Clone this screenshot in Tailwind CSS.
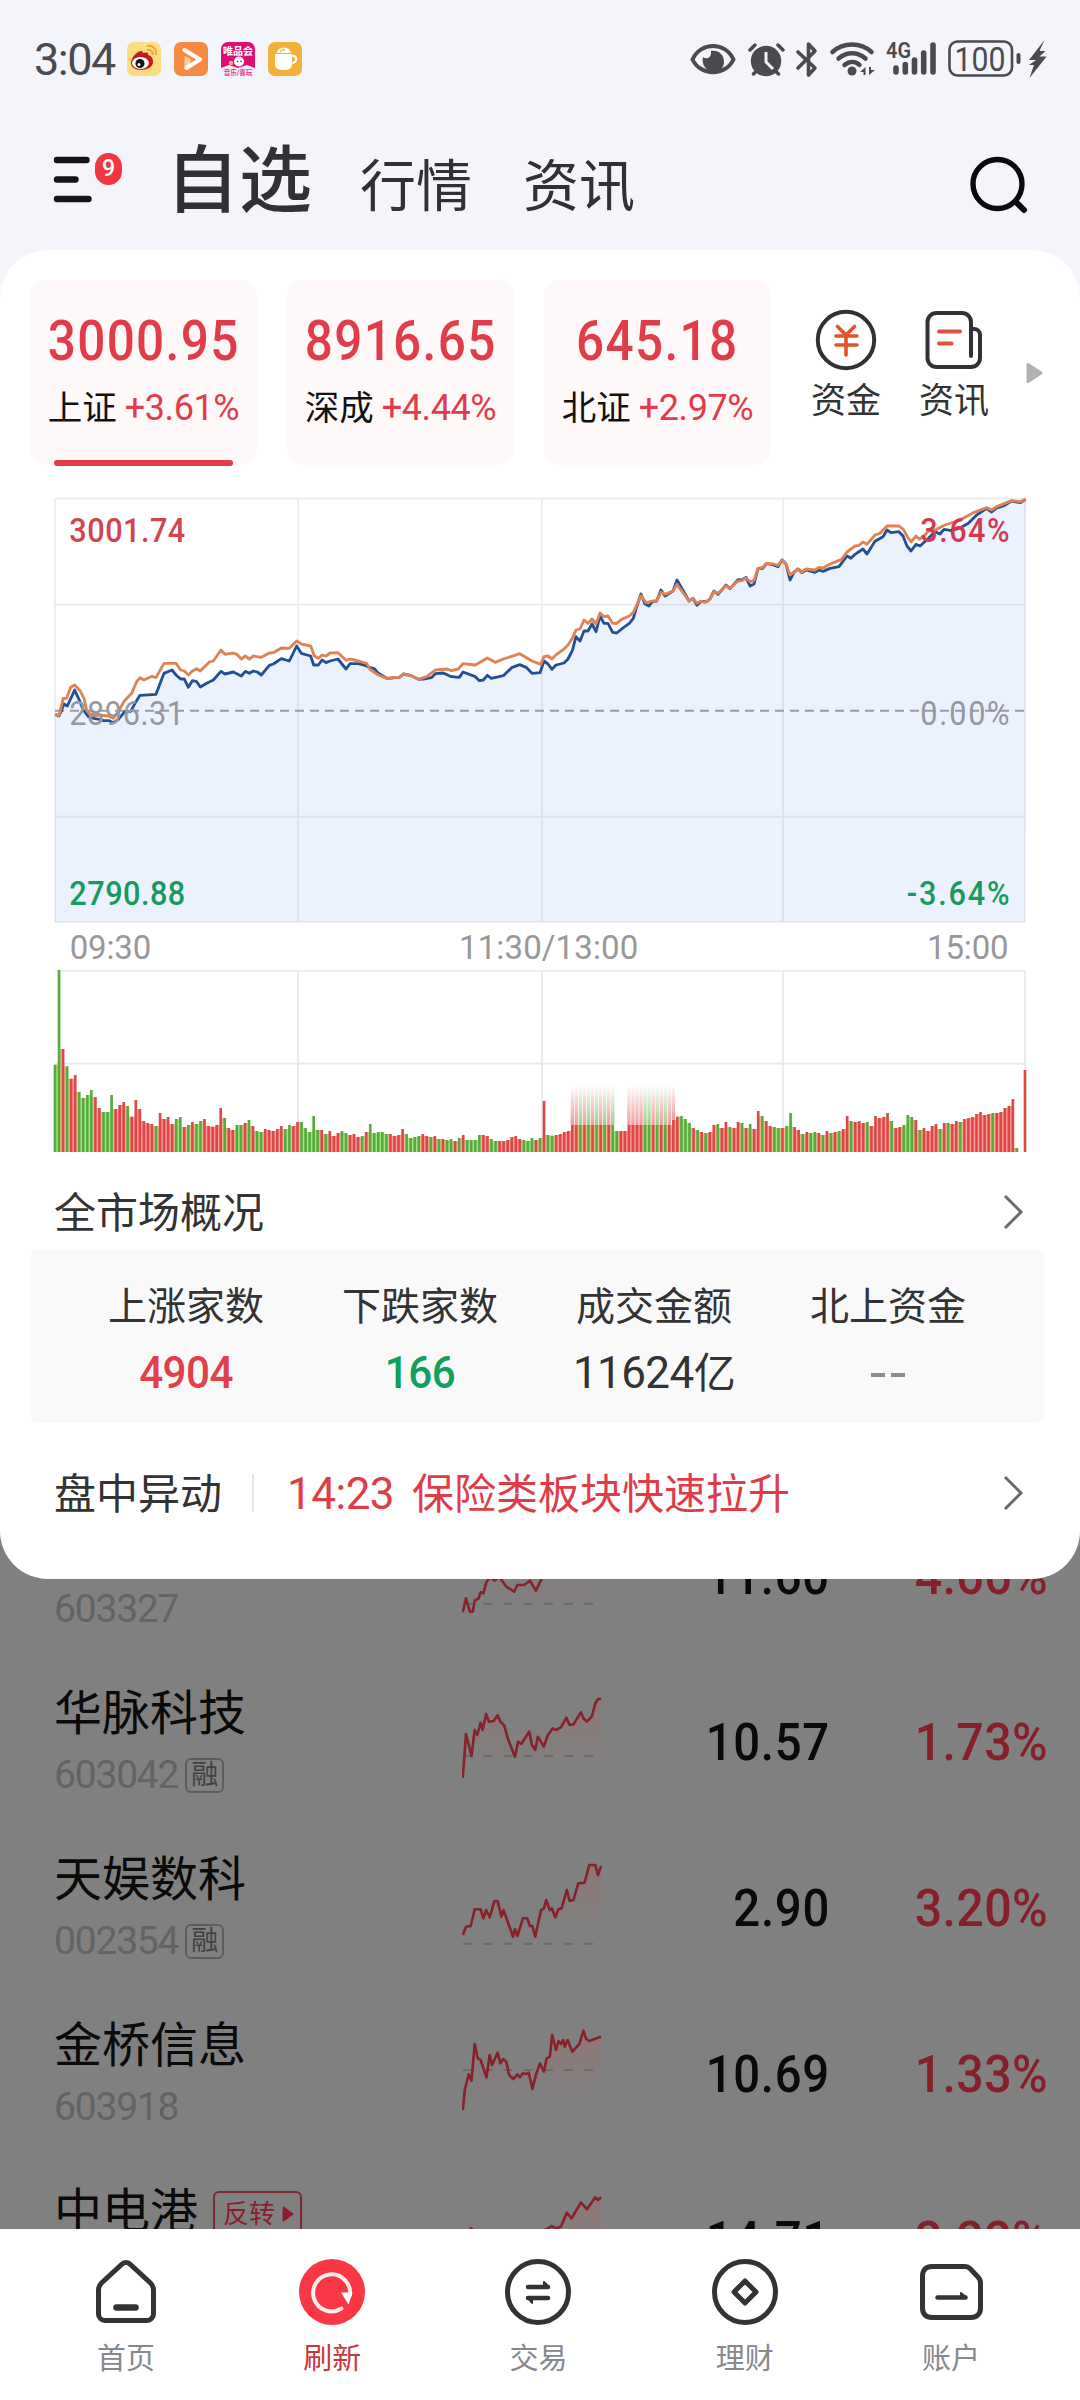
<!DOCTYPE html>
<html lang="zh-CN">
<head>
<meta charset="utf-8">
<title>自选</title>
<script src="https://cdn.jsdelivr.net/npm/@tailwindcss/browser@4"></script>
</head>
<body class="bg-[#f4f5fa]">
<div class="relative flex h-[2400px] w-[1080px] flex-col overflow-hidden bg-[#f4f5fa] font-['Roboto','Noto_Sans_CJK_SC',sans-serif] text-[#333]">

  <!-- status bar -->
  <div class="flex h-[118px] shrink-0 items-center pl-[34px] pr-[34px] text-[#4a4b4e]">
    <div class="w-[93px] pt-[2px] text-[45px] leading-[50px] tracking-[-1.500px]">3:04</div>
    <div class="flex gap-[13px]">
      <svg width="34" height="34" viewBox="0 0 34 34"><rect width="34" height="34" rx="7" fill="#fcdd80"/><path d="M20 8c3-1 6 1 6 5M20 4c6-1 10 3 9 9" fill="none" stroke="#e9a93c" stroke-width="2"/><path d="M4 21c0-5 5-11 10-12 2 0 2 1 2 2 3-1 6-1 5 2 4 1 5 4 5 7 0 5-6 8-12 8S4 25 4 21z" fill="#c8191e"/><ellipse cx="13.500" cy="21" rx="8.500" ry="6" fill="#fff"/><circle cx="13" cy="21.500" r="4.500" fill="#111"/><circle cx="12" cy="22.500" r="1.500" fill="#fff"/></svg>
      <svg width="34" height="34" viewBox="0 0 34 34"><rect width="34" height="34" rx="7" fill="#f68a42"/><path d="M10.500 14v13l6-3v-7z" fill="#fbd0a8"/><path d="M10.500 8L26 17.500 12.500 26" fill="none" stroke="#fff" stroke-width="4" stroke-linecap="round" stroke-linejoin="round"/></svg>
      <svg width="34" height="34" viewBox="0 0 34 34"><rect width="34" height="34" rx="7" fill="#fbe9f3"/><path d="M0 26V7a7 7 0 0 1 7-7h20a7 7 0 0 1 7 7v19l-8-3-9 3-9-3z" fill="#dd0f74"/><text x="17" y="13" font-size="10" font-weight="700" fill="#fff" text-anchor="middle">唯品会</text><circle cx="18" cy="19.500" r="5" fill="#fff"/><circle cx="10" cy="21" r="2.200" fill="#f6b48c"/><circle cx="16.500" cy="19.500" r=".8" fill="#333"/><circle cx="20" cy="19.500" r=".8" fill="#333"/><text x="17" y="32.500" font-size="6.500" font-weight="700" fill="#dd3f92" text-anchor="middle">音乐/喜玩</text></svg>
      <svg width="34" height="34" viewBox="0 0 34 34"><rect width="34" height="34" rx="7" fill="#f3b13c"/><path d="M9 11c1-7 13-7 14 0z" fill="#fff"/><path d="M12 10l3-3 2 2" fill="none" stroke="#f3b13c" stroke-width="1.200"/><path d="M7 12h17v10c0 4-3 6-8.500 6S7 26 7 22z" fill="#fff"/><path d="M24 14c6-1 5 7 0 7" fill="none" stroke="#fff" stroke-width="2.200"/></svg>
    </div>
    <div class="ml-auto flex items-center">
      <svg width="356" height="40" viewBox="690 38 356 40">
        <path d="M692.500 58.500c8-18 33-18 41 0-8 17-33 17-41 0z" fill="none" stroke="#4a4b4e" stroke-width="4"/>
        <path d="M703 56c3 3 9 1 8-6 8-1 13 4 13 11 0 6-5 10-10 10-7 0-13-7-11-15z" fill="#4a4b4e"/>
        <circle cx="766" cy="60" r="15.200" fill="#4a4b4e"/><path d="M750 49l5-5M783 49l-5-5M753.500 73l3-3M778.500 73l-3-3" stroke="#4a4b4e" stroke-width="3.500" stroke-linecap="round"/><path d="M766 51v10l7 7" fill="none" stroke="#f4f5fa" stroke-width="3"/>
        <path d="M798 51l17 16-6.500 7V43l6.500 7-17 17" fill="none" stroke="#4a4b4e" stroke-width="3.600" stroke-linejoin="round" stroke-linecap="round"/>
        <g fill="none" stroke="#4a4b4e" stroke-width="4.500" stroke-linecap="round"><path d="M832.500 51c11-10 28-10 39 0M838.500 57.500c8-7 19-7 27 0M844.500 64c5-4 11-4 15 0"/></g>
        <circle cx="852" cy="70" r="4.500" fill="#4a4b4e"/><path d="M860 71l5.500-5v8h-2v-3zM875 69l-6 5v-8h2v3z" fill="#4a4b4e"/>
        <text x="886" y="57" font-size="22" font-weight="600" fill="#4a4b4e" textLength="25" lengthAdjust="spacingAndGlyphs">4G</text>
        <g stroke="#4a4b4e" stroke-width="5.600" stroke-linecap="round"><path d="M896 67v4M905.300 63.500v7.500M914.500 59v12M923.700 52v19M933 44v27"/></g>
        <rect x="949.500" y="40.500" width="62.500" height="34" rx="8" fill="none" stroke="#4a4b4e" stroke-width="2.600"/><rect x="1016.500" y="52" width="4" height="11" rx="2" fill="#4a4b4e"/>
        <text x="954.500" y="69.500" font-size="33" fill="#4a4b4e" textLength="51" lengthAdjust="spacingAndGlyphs">100</text>
        <path d="M1044.500 39l-15.500 20h7l-7 5h5l-4.500 13 17-21.500h-7l6-5.500h-6z" fill="#4a4b4e"/>
      </svg>
    </div>
  </div>

  <!-- header -->
  <div class="flex h-[132px] shrink-0 items-start pl-[50px]">
    <div class="relative mt-[35px] h-[54px] w-[116px]">
      <svg width="76" height="54" viewBox="0 0 76 54"><path d="M7 7h29.500M7 26.500h18.500M7 46h31.500" stroke="#141517" stroke-width="6.400" stroke-linecap="round"/></svg>
      <span class="absolute left-[45px] top-0 flex h-8 w-[27px] items-center justify-center rounded-[14px] bg-[#ef3842] text-[23px] font-medium leading-8 text-white">9</span>
    </div>
    <div class="flex items-baseline pt-[3px] text-[#2f3133]">
      <span class="w-[194px] text-[73px] font-medium leading-[120px]">自选</span>
      <span class="w-[163px] text-[56px] leading-[120px]">行情</span>
      <span class="text-[56px] leading-[120px]">资讯</span>
    </div>
    <svg class="ml-auto mr-[50px] mt-[34px]" width="60" height="64" viewBox="0 0 60 64"><circle cx="27.500" cy="32" r="24.500" fill="none" stroke="#0a0a0c" stroke-width="5.400"/><path d="M46 50l8 8" stroke="#0a0a0c" stroke-width="6" stroke-linecap="round"/></svg>
  </div>

  <!-- market panel -->
  <section class="relative z-10 flex h-[1329px] shrink-0 flex-col rounded-[48px] bg-white">
    <div class="flex h-[230px] shrink-0 pl-[30px] pt-[30px]">
      <div class="flex gap-[30px]">
        <div class="relative flex h-[185px] w-[227px] flex-col items-center rounded-2xl bg-[#fef8f8] text-[#e03c4a]">
          <div class="mt-[31px] scale-x-[0.9] text-[55px] font-medium leading-[60px] tracking-[1.500px]">3000.95</div>
          <div class="mt-[17px] flex items-center gap-2 text-[36px] leading-[40px] tracking-[-0.400px]"><span class="text-[34.500px] tracking-normal text-[#111]">上证</span>+3.61%</div>
          <div class="absolute bottom-[-1px] left-[24px] h-[6px] w-[179px] rounded-full bg-[#e23b4b]"></div>
        </div>
        <div class="flex h-[185px] w-[227px] flex-col items-center rounded-2xl bg-[#fef8f8] text-[#e03c4a]">
          <div class="mt-[31px] scale-x-[0.9] text-[55px] font-medium leading-[60px] tracking-[1.500px]">8916.65</div>
          <div class="mt-[17px] flex items-center gap-2 text-[36px] leading-[40px] tracking-[-0.400px]"><span class="text-[34.500px] tracking-normal text-[#111]">深成</span>+4.44%</div>
        </div>
        <div class="flex h-[185px] w-[227px] flex-col items-center rounded-2xl bg-[#fef8f8] text-[#e03c4a]">
          <div class="mt-[31px] scale-x-[0.9] text-[55px] font-medium leading-[60px] tracking-[1.500px]">645.18</div>
          <div class="mt-[17px] flex items-center gap-2 text-[36px] leading-[40px] tracking-[-0.400px]"><span class="text-[34.500px] tracking-normal text-[#111]">北证</span>+2.97%</div>
        </div>
      </div>
      <div class="ml-[21px] flex w-[108px] flex-col items-center pt-[28px]">
        <svg width="64" height="64" viewBox="0 0 64 64"><circle cx="32" cy="32" r="28.200" fill="none" stroke="#303134" stroke-width="4"/><path d="M23.500 18.500L32 27l8.500-8.500M22 28h21M22 37h21M32 28v19" fill="none" stroke="#e2532c" stroke-width="3.600" stroke-linecap="round" stroke-linejoin="round"/></svg>
        <div class="mt-[10px] text-[35px] leading-[40px]">资金</div>
      </div>
      <div class="flex w-[108px] flex-col items-center pt-[28px]">
        <svg width="64" height="64" viewBox="0 0 64 64"><path d="M49 48V14a9 9 0 0 0-9-9H14.500a9 9 0 0 0-9 9v36a9 9 0 0 0 9 9H49a9 9 0 0 0 9-9V27a6 6 0 0 0-6-6h-2" fill="none" stroke="#303134" stroke-width="4" stroke-linecap="round"/><path d="M17 23.500h21M17 35.500h12.500" stroke="#d9553a" stroke-width="4" stroke-linecap="round"/></svg>
        <div class="mt-[10px] text-[35px] leading-[40px]">资讯</div>
      </div>
      <svg class="ml-[17px] mt-[81px]" width="20" height="24" viewBox="0 0 20 24"><path d="M3 3.500v17L16 12z" fill="#b1b1b1" stroke="#b1b1b1" stroke-width="3" stroke-linejoin="round"/></svg>
    </div>

    <!-- intraday and volume charts -->
    <svg class="ml-[40px] shrink-0" id="chart" width="1000" height="690" viewBox="0 0 3000 2070">
      <defs>
        <linearGradient id="fr" x1="0" y1="0" x2="0" y2="1"><stop offset="0" stop-color="#e5484a" stop-opacity="0"/><stop offset="1" stop-color="#e5484a" stop-opacity=".55"/></linearGradient>
        <linearGradient id="fg" x1="0" y1="0" x2="0" y2="1"><stop offset="0" stop-color="#5cb03c" stop-opacity="0"/><stop offset="1" stop-color="#5cb03c" stop-opacity=".6"/></linearGradient>
      </defs>
      <polygon id="area" fill="#ebf1fd"/>
      <g fill="none" stroke-width="5">
        <path d="M45 56H2955M45 374H2955M45 1010H2955M45 1326H2955M45 54V1328M774 56V1326M1506 56V1326M2229 56V1326M2955 56V1326" stroke="#788296" stroke-opacity=".15"/>
        <path d="M45 1473H2957M45 1751H2955M774 1473V2010M1506 1473V2010M2229 1473V2010M2955 1473V2010" stroke="#e8e8e9"/>
      </g>
      <path d="M45 692H2955" stroke="#989ca5" stroke-width="6" stroke-dasharray="27 18"/>
      <polyline id="blue" fill="none" stroke="#234f95" stroke-width="8.500" stroke-linejoin="round"/>
      <polyline id="orange" fill="none" stroke="#df8254" stroke-width="8.500" stroke-linejoin="round"/>
      <g id="bars"></g>
      <g font-size="99">
        <g transform="translate(88 185) scale(.93 1)" font-weight="500"><text fill="#d34452" textLength="374">3001.74</text><text y="1090" fill="#169a60" textLength="374">2790.88</text></g>
        <g transform="translate(88 735) scale(.93 1)"><text fill="#95989f" textLength="370">2896.31</text></g>
        <g transform="translate(2641 185) scale(.93 1)" font-weight="500"><text fill="#d33a52" textLength="288">3.64%</text><text y="550" fill="#95989f" font-weight="400" textLength="288">0.00%</text><text x="-44" y="1090" fill="#169a60" textLength="332">-3.64%</text></g>
        <g fill="#98989a"><text x="89" y="1437" textLength="245">09:30</text><text x="1257" y="1437" textLength="538">11:30/13:00</text><text x="2661" y="1437" textLength="245">15:00</text></g>
      </g>
    </svg>

    <div class="mt-[12px] flex h-[60px] shrink-0 items-center justify-between pl-[54px] pr-[56px]">
      <span class="pt-[3px] text-[42px] leading-[60px]">全市场概况</span>
      <svg width="22" height="38" viewBox="0 0 22 38"><path d="M3 3l16 16L3 35" fill="none" stroke="#68696c" stroke-width="3"/></svg>
    </div>
    <div class="ml-[30px] mt-[8px] grid h-[173px] w-[1014px] shrink-0 grid-cols-4 rounded-lg bg-[#f9f9f9] pl-[39px] pr-[39px] pt-[31px] text-center text-[44px] leading-[60px] tracking-[-0.600px]">
      <div><div class="text-[39px] leading-[52px] tracking-normal">上涨家数</div><div class="mt-[10px] scale-x-[0.96] font-medium text-[#df404c]">4904</div></div>
      <div><div class="text-[39px] leading-[52px] tracking-normal">下跌家数</div><div class="mt-[10px] scale-x-[0.96] font-medium text-[#119f5f]">166</div></div>
      <div><div class="text-[39px] leading-[52px] tracking-normal">成交金额</div><div class="mt-[10px]">11624<span class="text-[42px]">亿</span></div></div>
      <div><div class="text-[39px] leading-[52px] tracking-normal">北上资金</div><div class="mt-[24px] flex justify-center gap-[6px]"><i class="mt-4 h-[4px] w-[14px] bg-[#8c8c8c]"></i><i class="mt-4 h-[4px] w-[14px] bg-[#8c8c8c]"></i></div></div>
    </div>
    <div class="mt-[40px] flex h-[60px] shrink-0 items-center pl-[54px] pr-[56px] text-[42px] leading-[60px]">
      <span class="pt-[3px]">盘中异动</span>
      <i class="ml-[30px] h-[38px] w-[2px] bg-[#e6e6e8]"></i>
      <span class="ml-[33px] w-[125px] pt-[2px] text-[44px] tracking-[-0.500px] text-[#e03c48]">14:23</span>
      <span class="pt-[3px] text-[#e03c48]">保险类板块快速拉升</span>
      <svg class="ml-auto" width="22" height="38" viewBox="0 0 22 38"><path d="M3 3l16 16L3 35" fill="none" stroke="#68696c" stroke-width="3"/></svg>
    </div>
  </section>

  <!-- watch list behind the panel -->
  <div class="-mt-[88px] flex h-[738px] shrink-0 flex-col overflow-hidden bg-[#808080]">
    <div class="flex h-[166px] shrink-0 items-center pl-[54px] pr-[32px]">
      <div class="w-[408px] pt-[6px]"><div class="mt-[64px] flex h-[50px] items-center text-[39px] leading-[50px] tracking-[-1.200px] text-[#636363]">603327</div></div>
      <svg class="spark" width="142" height="166" data-top="-207" data-dash="131" data-p="1170,157 1178,115 1188,155 1195,155 1200,122 1210,115 1215,97 1222,100 1230,65 1240,50 1250,62 1262,50 1280,80 1300,95 1308,75 1325,75 1340,62 1355,92 1370,55 1400,30 1520,-60"></svg>
      <div class="w-[226px] origin-right scale-x-[0.91] pt-[6px] text-right text-[52px] font-medium leading-[60px] tracking-[0.800px] text-[#0a0a0a]">11.60</div>
      <div class="flex-1 origin-right scale-x-[0.93] pt-[6px] text-right text-[52px] font-medium leading-[60px] tracking-[0.400px] text-[#85202a]">4.66%</div>
    </div>
    <div class="flex h-[166px] shrink-0 items-center pl-[54px] pr-[32px]">
      <div class="w-[408px] pt-[6px]"><div class="text-[48px] leading-[56px] text-[#0a0a0a]">华脉科技</div><div class="mt-[8px] flex h-[50px] items-center text-[39px] leading-[50px] tracking-[-1.200px] text-[#636363]">603042<span class="ml-[7px] flex h-[35px] w-[39px] items-center justify-center rounded-md border-2 border-[#5c5c5c] text-[27px] leading-[30px] tracking-normal text-[#404040]">融</span></div></div>
      <svg class="spark" width="142" height="166" data-top="291" data-dash="588" data-p="1170,654 1178,522 1192,588 1200,510 1207,525 1215,488 1220,510 1229,462 1236,485 1248,483 1258,466 1265,485 1275,497 1285,540 1302,590 1310,545 1318,552 1338,515 1345,555 1353,570 1360,530 1375,560 1385,525 1398,505 1405,510 1418,502 1432,473 1440,495 1450,493 1469,457 1475,475 1484,485 1497,468 1505,430 1512,417 1520,417"></svg>
      <div class="w-[226px] origin-right scale-x-[0.91] pt-[6px] text-right text-[52px] font-medium leading-[60px] tracking-[0.800px] text-[#0a0a0a]">10.57</div>
      <div class="flex-1 origin-right scale-x-[0.93] pt-[6px] text-right text-[52px] font-medium leading-[60px] tracking-[0.400px] text-[#85202a]">1.73%</div>
    </div>
    <div class="flex h-[166px] shrink-0 items-center pl-[54px] pr-[32px]">
      <div class="w-[408px] pt-[6px]"><div class="text-[48px] leading-[56px] text-[#0a0a0a]">天娱数科</div><div class="mt-[8px] flex h-[50px] items-center text-[39px] leading-[50px] tracking-[-1.200px] text-[#636363]">002354<span class="ml-[7px] flex h-[35px] w-[39px] items-center justify-center rounded-md border-2 border-[#5c5c5c] text-[27px] leading-[30px] tracking-normal text-[#404040]">融</span></div></div>
      <svg class="spark" width="142" height="166" data-top="-201" data-dash="161" data-p="1170,135 1178,110 1190,108 1200,58 1215,58 1222,85 1229,60 1238,82 1250,33 1258,33 1268,80 1273,60 1285,100 1297,140 1302,118 1308,138 1322,85 1333,85 1340,108 1346,108 1353,140 1368,60 1375,55 1381,30 1390,60 1395,55 1404,82 1412,58 1420,55 1433,0 1440,33 1450,30 1462,-20 1478,-22 1490,-75 1505,-75 1512,-45 1516,-60 1520,-72"></svg>
      <div class="w-[226px] origin-right scale-x-[0.91] pt-[6px] text-right text-[52px] font-medium leading-[60px] tracking-[0.800px] text-[#0a0a0a]">2.90</div>
      <div class="flex-1 origin-right scale-x-[0.93] pt-[6px] text-right text-[52px] font-medium leading-[60px] tracking-[0.400px] text-[#85202a]">3.20%</div>
    </div>
    <div class="flex h-[166px] shrink-0 items-center pl-[54px] pr-[32px]">
      <div class="w-[408px] pt-[6px]"><div class="text-[48px] leading-[56px] text-[#0a0a0a]">金桥信息</div><div class="mt-[8px] flex h-[50px] items-center text-[39px] leading-[50px] tracking-[-1.200px] text-[#636363]">603918</div></div>
      <svg class="spark" width="142" height="166" data-top="297" data-dash="540" data-p="1170,660 1175,600 1185,553 1192,572 1200,462 1208,505 1215,510 1230,562 1238,495 1244,525 1258,488 1265,520 1272,507 1280,515 1287,555 1298,567 1308,553 1315,562 1322,550 1332,552 1337,548 1346,597 1355,555 1365,520 1375,545 1382,505 1390,500 1396,435 1406,480 1412,453 1418,462 1424,450 1428,470 1435,450 1447,485 1465,462 1475,422 1482,447 1490,453 1512,443 1520,440"></svg>
      <div class="w-[226px] origin-right scale-x-[0.91] pt-[6px] text-right text-[52px] font-medium leading-[60px] tracking-[0.800px] text-[#0a0a0a]">10.69</div>
      <div class="flex-1 origin-right scale-x-[0.93] pt-[6px] text-right text-[52px] font-medium leading-[60px] tracking-[0.400px] text-[#85202a]">1.33%</div>
    </div>
    <div class="flex h-[166px] shrink-0 items-center pl-[54px] pr-[32px]">
      <div class="h-[120px] w-[408px] pt-[6px]"><div class="flex items-center text-[48px] leading-[56px] text-[#0a0a0a]">中电港<span class="ml-[15px] mt-[4px] flex h-[46px] w-[89px] items-center gap-[7px] rounded-md border-2 border-[#7c2731] pl-[8px] text-[26px] leading-[40px] text-[#8a1f2b]">反转<svg width="12" height="16" viewBox="0 0 12 16"><path d="M1.500 1.500v13L10.500 8z" fill="#8a1f2b" stroke="#8a1f2b" stroke-width="2" stroke-linejoin="round"/></svg></span></div></div>
      <svg class="spark" width="142" height="166" data-top="795" data-dash="1100" data-p="1170,1060 1190,1015 1220,1040 1300,1070 1385,1015 1395,1008 1405,1015 1418,1010 1433,968 1445,985 1469,937 1484,958 1505,922 1512,930 1520,922"></svg>
      <div class="w-[226px] origin-right scale-x-[0.91] pt-[6px] text-right text-[52px] font-medium leading-[60px] tracking-[0.800px] text-[#0a0a0a]">14.71</div>
      <div class="flex-1 origin-right scale-x-[0.93] pt-[6px] text-right text-[52px] font-medium leading-[60px] tracking-[0.400px] text-[#85202a]">2.22%</div>
    </div>
  </div>

  <!-- tab bar -->
  <nav class="relative z-10 grid h-[171px] shrink-0 grid-cols-5 bg-white pl-[23px] pr-[26px] pt-[28px] text-[29px] leading-[40px] text-[#85888c]">
    <div class="flex flex-col items-center"><svg width="70" height="70" viewBox="0 0 70 70"><path d="M7.500 57V33c0-3 1-5 3-7L30.500 7.500a6 6 0 0 1 9 0L59.500 26c2 2 3 4 3 7v24a6.500 6.500 0 0 1-6.500 6.500H14A6.500 6.500 0 0 1 7.500 57z" fill="none" stroke="#333" stroke-width="5"/><path d="M25.500 50.500h19" stroke="#333" stroke-width="6.500" stroke-linecap="round"/></svg><span class="mt-[12px]">首页</span></div>
    <div class="flex flex-col items-center text-[#c9373c]"><svg width="70" height="70" viewBox="0 0 70 70"><circle cx="35" cy="35" r="33" fill="#fa3744"/><path d="M44.500 51.500A18.500 18.500 0 1 1 53 38" fill="none" stroke="#ffecec" stroke-width="4" stroke-linecap="round"/><path d="M44 35.500h11.500l-4 12z" fill="#fff"/></svg><span class="mt-[12px]">刷新</span></div>
    <div class="flex flex-col items-center"><svg width="70" height="70" viewBox="0 0 70 70"><circle cx="35" cy="35" r="30.500" fill="none" stroke="#333" stroke-width="5"/><g fill="#333" stroke="#333" stroke-linecap="round" stroke-linejoin="round"><path d="M25 30h20M25 41h20" stroke-width="4.500"/><path d="M41 30v-5l5 5zM29 41v5l-4-5z" stroke-width="2"/></g></svg><span class="mt-[12px]">交易</span></div>
    <div class="flex flex-col items-center"><svg width="70" height="70" viewBox="0 0 70 70"><circle cx="35" cy="35" r="30.500" fill="none" stroke="#333" stroke-width="5"/><path d="M35 24l11 11-11 11-11-11z" fill="none" stroke="#333" stroke-width="5" stroke-linejoin="round"/></svg><span class="mt-[12px]">理财</span></div>
    <div class="flex flex-col items-center"><svg width="70" height="70" viewBox="0 0 70 70"><path d="M16 9.500h33c2 0 4 1 5 2l8 8.500c2 2 2.500 3 2.500 6v25c0 6-4 9.500-9.500 9.500H16c-6 0-9.500-3.500-9.500-9.500V19c0-6 3.500-9.500 9.500-9.500z" fill="none" stroke="#333" stroke-width="5"/><path d="M21.500 40.500h28" stroke="#333" stroke-width="4.500" stroke-linecap="round"/><path d="M45 40v-4l5 4z" fill="#333" stroke="#333" stroke-width="2" stroke-linejoin="round"/></svg><span class="mt-[12px]">账户</span></div>
  </nav>
</div>

<script>
const NS = 'http://www.w3.org/2000/svg';
const pts = s => s.trim().split(/\s+/).map(p => p.split(',').map(Number));
const str = a => a.map(p => p.join(',')).join(' ');
const shift = (a, d) => a.map(p => [p[0] + d, p[1]]);

// price line (morning, afternoon)
const price = pts('45,703 57,708 72,672 82,678 104,630 120,665 130,690 145,710 165,716 180,718 190,722 208,722 220,728 235,718 255,694 272,694 285,670 300,646 348,643 372,580 396,570 408,585 422,597 433,597 445,622 457,602 470,605 481,621 500,610 520,600 543,574 555,582 580,576 604,588 616,574 628,580 640,573 652,576 664,585 688,556 700,552 724,536 748,543 770,498 784,520 812,528 821,555 835,555 846,540 858,548 870,543 894,537 918,567 930,551 955,551 975,556 990,563 1003,566 1015,580 1040,595 1055,594 1065,592 1078,592 1090,582 1110,586 1136,598 1150,597 1174,593 1186,581 1210,579 1234,590 1258,592 1269,576 1306,590 1318,602 1330,600 1342,586 1354,595 1390,587 1415,563 1439,554 1460,563 1476,580 1500,578')
  .concat(shift(pts('12,543 24,552 36,568 48,555 72,549 84,537 97,512 108,470 120,483 132,453 144,453 156,432 168,455 180,408 192,430 204,430 218,457 230,459 250,443 268,430 280,415 290,380 303,342 315,372 327,378 337,365 350,363 363,330 375,348 399,333 411,300 430,333 447,363 459,355 471,376 483,364 500,365 510,357 522,333 534,343 558,315 570,326 594,299 606,300 618,292 630,318 642,312 654,265 668,265 680,250 700,255 714,260 726,240 738,252 750,300 762,277 774,267 786,278 798,270 825,277 837,270 849,274 870,265 897,260 921,228 933,235 945,223 969,207 981,222 1005,184 1029,170 1041,150 1053,158 1077,155 1089,168 1101,198 1113,213 1128,193 1140,198 1160,180 1185,155 1200,162 1212,148 1235,152 1260,144 1285,130 1310,105 1340,85 1355,96 1370,84 1390,78 1415,63 1440,68 1457,58'), 1500));
// average line
const lead = pts('45,703 57,706 70,655 80,655 92,622 104,615 120,632 132,655 140,690 155,708 175,705 205,708 220,715 235,695 252,664 275,640 290,605 300,593 312,600 336,589 348,593 372,550 408,550 422,570 433,573 445,585 457,573 470,566 481,573 508,546 520,543 543,510 555,523 580,519 592,524 604,537 616,528 628,537 640,528 664,532 688,519 700,518 724,504 748,505 770,483 784,492 812,498 823,528 835,535 846,525 858,528 870,519 894,518 918,541 930,537 955,543 980,550 990,568 1015,585 1040,595 1065,592 1078,592 1090,582 1110,586 1136,598 1160,590 1186,570 1222,567 1234,572 1255,567 1269,551 1306,555 1342,534 1366,547 1390,537 1415,529 1439,521 1476,543 1502,553 1512,530')
  .concat(shift(pts('24,528 36,537 50,523 72,507 84,495 97,475 108,450 120,447 132,420 144,430 156,417 168,432 180,399 192,410 204,408 218,430 230,430 245,418 268,408 280,397 303,347 318,368 337,363 350,363 363,337 375,343 399,333 411,313 447,363 459,355 471,370 483,363 495,367 510,357 522,335 534,340 558,317 570,325 594,303 606,302 618,294 630,305 642,302 654,265 668,262 680,250 700,252 714,256 726,241 738,252 750,285 774,267 786,276 798,267 825,270 837,262 849,264 875,250 905,238 921,216 945,198 957,196 969,186 981,193 1005,165 1020,160 1041,138 1077,138 1090,148 1101,168 1113,186 1128,168 1138,178 1155,165 1165,153 1185,150 1215,135 1260,120 1300,98 1340,83 1355,90 1370,80 1415,62 1440,65 1457,57'), 1500));
document.getElementById('blue').setAttribute('points', str(price));
document.getElementById('orange').setAttribute('points', str(lead));
document.getElementById('area').setAttribute('points', str(price) + ' 2955,1326 45,1326');

// volume per minute: top edge and direction; f marks columns that fade out upwards
const vol = ('374g 90g 327r 379g 416r 405r 456g 474g 465g 450g 471r 504r 516g 516g 465g 507r 495r 486r 498g 530r 480r 507r 543r 549r 552r 558g 519r 537r 531r 552r 537g 531g 561r 555g 546r 552g 543g 537r 558r 560r 555r 504r 534g 564r 570r 555g 555g 549r 540g 558r 573g 576g 567r 570r 573r 567r 558r 567g 555g 558r 546r 546g 564g 576g 528g 570g 570r 582g 573r 588r 579r 573g 579g 585r 582r 591r 588g 576r 552g 579g 576g 576g 582g 582r 588r 585r 567r 582g 594g 591g 588g 582r 588r 591g 588r 597g 597r 600g 597g 603r 594g 585r 600g 600g 600g 585g 585r 588r 597g 603g 603r 603r 600r 591r 588r 597r 600g 603g 594g 600r 594g 483r '
  + '585g 587g 585r 582r 576r 573r 555rf 555rf 555gf 555rf 555gf 555rf 555gf 555rf 555gf 555rf 555gf 573g 573r 573r 555rf 555rf 555rf 555rf 555gf 555gf 555rf 555gf 555rf 555gf 555rf 540rf 530r '
  + '528g 537g 549g 564r 570g 576r 579g 576r 555r 552g 564r 546r 561g 564r 546r 549g 564r 552g 567r 513r 528g 543r 558r 561g 564g 564r 558g 519g 561r 570r 582g 576r 579g 576g 579r 585g 573r 579g 576r 573g 567r 528r 543g 546r 543r 549r 546g 558r 528r 534r 531r 519r 543g 564r 561r 555g 525g 531g 540r 570g 564r 573r 558r 552r 567g 549r 549g 552r 543r 546g 537r 534r 531r 522r 516r 525r 522r 519g 519r 516r 504r 498r 477r 624g 636r 390r').trim().split(/\s+/);
const bars = document.getElementById('bars');
const rect = (x, y, w, h, fill) => {
  const r = document.createElementNS(NS, 'rect');
  Object.entries({ x, y, width: w, height: Math.max(h, 0), fill }).forEach(([k, v]) => r.setAttribute(k, v));
  bars.appendChild(r);
};
vol.forEach((v, i) => {
  const top = parseInt(v), x = 45 + i * 12.125, red = v.includes('r');
  if (vol[i + 1]) {
    const t = Math.max(top, parseInt(vol[i + 1])), same = red === vol[i + 1].includes('r');
    rect(x + 3, 1380 + t, 7, 636 - t, same ? (red ? '#fd9c98' : '#a6e38b') : '#e2bd90');
  }
  rect(x - 4, 1380 + top, 8, 636 - top, red ? '#dd4847' : '#56ab39');
  if (v.includes('f')) rect(x - 5, 1380 + 435, 10, top - 435, red ? 'url(#fr)' : 'url(#fg)');
});

// sparklines
document.querySelectorAll('.spark').forEach((s, i) => {
  const p = pts(s.dataset.p).map(([x, y]) => [((x - 1168) / 2.529).toFixed(1), ((y - s.dataset.top) / 3).toFixed(1)]);
  const d = (s.dataset.dash - s.dataset.top) / 3;
  s.innerHTML = `<defs><linearGradient id="s${i}" x1="0" y1="0" x2="0" y2="1"><stop offset="0" stop-color="#98706f" stop-opacity=".75"/><stop offset="1" stop-color="#808080" stop-opacity="0"/></linearGradient></defs>
    <polygon points="${str(p)} 139,125 1,125" fill="url(#s${i})"/>
    <path d="M1 ${d}H131" stroke="#6a6a6a" stroke-width="2" stroke-dasharray="9 11.200"/>
    <polyline points="${str(p)}" fill="none" stroke="#85222a" stroke-width="2.600" stroke-linejoin="round"/>`;
});
</script>
</body>
</html>
